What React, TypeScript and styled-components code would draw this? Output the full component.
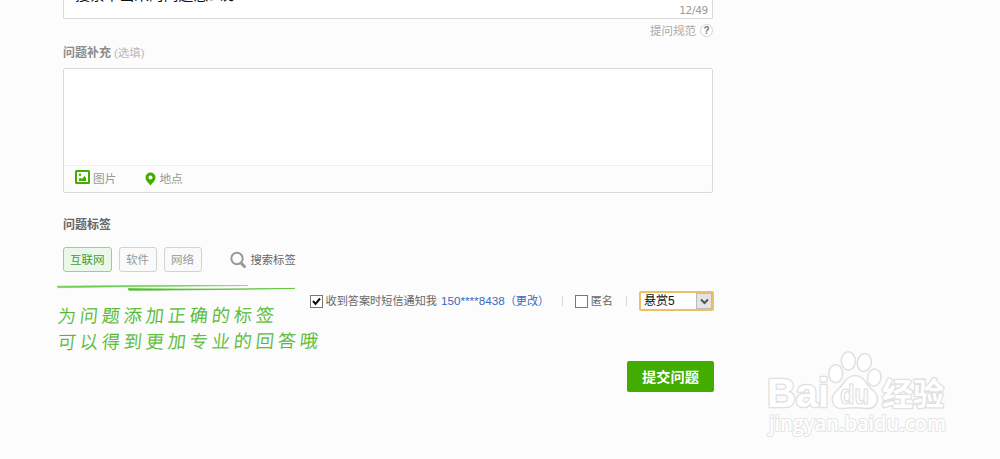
import React, { useState } from "react";
import styled, { createGlobalStyle, css } from "styled-components";

const GlobalStyle = createGlobalStyle`
  * {
    box-sizing: border-box;
  }

  body {
    margin: 0;
    height: 459px;
    overflow: hidden;
    background: #fcfcfc;
    color: #666;
    font: 12px/18px "Liberation Sans", "Noto Sans CJK SC", sans-serif;
  }
`;

const Page = styled.div`
  position: relative;
  height: 459px;
  overflow: hidden;
`;

const AskForm = styled.form`
  display: flex;
  flex-direction: column;
  width: 650px;
  margin-left: 63px;
`;

const TitleBox = styled.div`
  display: flex;
  justify-content: space-between;
  height: 19px;
  padding: 0 4px 0 11px;
  border: 1px solid #d9d9d9;
  border-top: 0;
  border-radius: 0 0 2px 2px;
  background: #fff;
`;

const TitleText = styled.div`
  margin-top: -14px;
  color: #111;
  font-size: 14.8px;
  line-height: 19px;
  white-space: nowrap;
`;

const Counter = styled.div`
  padding-top: 1px;
  color: #999;
  font: 10.5px/18px "DejaVu Sans", sans-serif;
  letter-spacing: -0.3px;
`;

const Rules = styled.div`
  display: flex;
  align-items: center;
  justify-content: flex-end;
  gap: 4px;
  height: 23px;
  margin-bottom: 2px;
  color: #aaa;
  font-size: 11.5px;
`;

const HelpMark = styled.span`
  width: 13px;
  height: 13px;
  border: 1px solid #d4d4d4;
  border-radius: 50%;
  background: #fff;
  color: #777;
  font-size: 10px;
  font-weight: bold;
  line-height: 11px;
  text-align: center;
`;

const Label = styled.div<{ $dark?: boolean }>`
  height: 18px;
  color: ${({ $dark }) => ($dark ? "#666" : "#8c8c8c")};
  font-weight: bold;

  small {
    margin-left: 3px;
    color: #b8b8b8;
    font-size: 11.5px;
    font-weight: normal;
  }
`;

const Editor = styled.div`
  display: flex;
  flex-direction: column;
  height: 125px;
  margin: 6px 0 23px;
  border: 1px solid #d9d9d9;
  border-radius: 2px;
`;

const EditorInput = styled.div`
  flex: 1;
  background: #fff;
`;

const EditorTools = styled.div`
  display: flex;
  gap: 28px;
  height: 27px;
  padding-left: 11px;
  border-top: 1px solid #eee;
  color: #999;
  font-size: 11.7px;
`;

const Tool = styled.div`
  display: flex;
  align-items: center;
  gap: 3px;

  svg {
    flex: none;
  }
`;

const TagRow = styled.div`
  display: flex;
  align-items: center;
  gap: 7px;
  height: 25px;
  margin-top: 13px;
`;

const Tag = styled.span<{ $active?: boolean }>`
  height: 25px;
  padding: 0 6.5px;
  border: 1px solid #d2d2d2;
  border-radius: 3px;
  background: #fafafa;
  color: #999;
  font-size: 11.5px;
  line-height: 24px;

  ${({ $active }) =>
    $active &&
    css`
      padding: 0 6px;
      border-color: #93d487;
      background: #ebf8e9;
      color: #459b36;
    `}
`;

const TagSearch = styled.span`
  display: flex;
  align-items: center;
  gap: 4px;
  margin-left: 21px;
  font-size: 11.3px;
`;

const Lower = styled.div`
  display: flex;
  justify-content: space-between;
  height: 89px;
  margin: 0 -1px 0 -7px;
`;

const Hint = styled.div`
  width: 240px;
  padding-top: 13px;

  svg {
    display: block;
    margin-bottom: 9px;
  }
`;

const HintLine = styled.div`
  width: 270px;
  padding-left: 2px;
  color: #4fb82b;
  font: 300 18px/26px "Noto Sans CJK SC", sans-serif;
  letter-spacing: 4px;
  white-space: nowrap;
  transform: skew(-6deg, -0.3deg);
  -webkit-text-stroke: 0.3px #4fb82b;
`;

const Options = styled.div`
  display: flex;
  align-items: center;
  flex: none;
  height: 20px;
  margin-top: 19px;
  font-size: 11.15px;
  white-space: nowrap;
`;

const Check = styled.span`
  display: flex;
  width: 13px;
  height: 13px;
  margin-right: 2.5px;
  border: 1px solid #777;
  background: #fff;
`;

const Phone = styled.span`
  margin-left: 4px;
  color: #3769c2;
`;

const PhoneNumber = styled.span`
  font-size: 11.7px;
`;

const Divider = styled.i`
  width: 1px;
  height: 10px;
  margin: 0 12.5px;
  background: #d4d9d4;
`;

const Reward = styled.div`
  display: flex;
  width: 75px;
  height: 20px;
  padding-left: 3px;
  border: 2px solid #ecc06b;
  border-radius: 2px;
  background: #fff;
  color: #111;
  font-size: 12px;
  line-height: 17px;
`;

const RewardArrow = styled.span`
  display: flex;
  align-items: center;
  justify-content: center;
  width: 16px;
  margin-left: auto;
  border: 1px solid #bbb;
  background: #e4e4e4;
`;

const Submit = styled.button`
  align-self: flex-end;
  width: 87px;
  height: 31px;
  margin-right: -1px;
  padding: 0;
  border: 0;
  border-radius: 2px;
  background: #43ac00;
  color: #fff;
  font: bold 14.2px/32px "Liberation Sans", "Noto Sans CJK SC", sans-serif;
`;

const Watermark = styled.svg`
  position: absolute;
  top: 345px;
  left: 760px;
`;

const PictureIcon = () => (
  <svg width="15" height="18" viewBox="0 0 15 18">
    <rect x="1" y="1" width="13" height="12" rx="0.5" fill="#fff" stroke="#43ac00" strokeWidth="2" />
    <circle cx="5" cy="4.7" r="1.2" fill="#43ac00" />
    <path d="M4 11V8.5l1.500-.5 1.500 1L9.500 6l1.500 2v3z" fill="#43ac00" />
  </svg>
);

const PinIcon = () => (
  <svg width="12" height="14" viewBox="0 0 12 14">
    <path
      d="M6.500 0.500a5 5 0 0 1 5 5c0 3-3 5.500-5 8-2-2.500-5-5-5-8a5 5 0 0 1 5-5zM6.500 3.500a2 2 0 1 0 0 4 2 2 0 0 0 0-4z"
      fill="#43ac00"
      fillRule="evenodd"
    />
  </svg>
);

const SearchIcon = () => (
  <svg width="17" height="18" viewBox="0 0 17 18" fill="none" stroke="#999">
    <circle cx="7" cy="7.5" r="5.7" strokeWidth="2" />
    <path d="M11.500 12.500l3 3" strokeWidth="3" strokeLinecap="round" />
  </svg>
);

const Strokes = () => (
  <svg width="242" height="7" viewBox="0 0 242 7">
    <path d="M1 1.200Q100 0 192 0.500Q100 1.500 2 2.700z" fill="#6fcc52" stroke="#6fcc52" strokeWidth="0.5" />
    <path d="M72 3.600Q140 4.500 239 3.400Q140 5 73 5.300z" fill="#52be2c" stroke="#52be2c" strokeWidth="0.7" />
  </svg>
);

const BaiduMark = () => (
  <Watermark width="200" height="105" viewBox="0 0 200 105">
    <g fill="#fff" stroke="#e0e0e0" strokeWidth="1.5">
      <g fontWeight="bold" paintOrder="stroke" strokeWidth="2.6" strokeLinejoin="round">
        <text
          x="7"
          y="62"
          fontSize="41"
          fontFamily="Liberation Sans, sans-serif"
          textLength="62"
          lengthAdjust="spacingAndGlyphs"
        >
          Bai
        </text>
        <text x="122" y="60" fontSize="31" fontFamily="Noto Sans CJK SC, sans-serif">
          经验
        </text>
      </g>
      <ellipse cx="75.7" cy="28.7" rx="7" ry="9" />
      <ellipse cx="88.3" cy="16" rx="7" ry="9.2" />
      <ellipse cx="104.3" cy="17.5" rx="7" ry="9" transform="rotate(10 104.3 17.5)" />
      <ellipse cx="114.3" cy="32.5" rx="6.7" ry="8.5" transform="rotate(10 114.3 32.5)" />
      <path d="M95 30.500c-9 0-11 9-17 14-10 8-6 20 5 19 8-1 15-1 23 0 11 1 16-11 6-19-6-5-8-14-17-14z" />
      <text
        x="80"
        y="59"
        fontSize="27"
        fontWeight="bold"
        fontFamily="Liberation Sans, sans-serif"
        strokeWidth="1.2"
        textLength="29"
        lengthAdjust="spacingAndGlyphs"
      >
        du
      </text>
    </g>
    <text
      x="9"
      y="86"
      fontSize="22"
      fontFamily="Open Sans, sans-serif"
      fontWeight="600"
      fill="#fff"
      stroke="#e4e4e4"
      strokeWidth="2"
      strokeLinejoin="round"
      paintOrder="stroke"
      textLength="177"
      lengthAdjust="spacingAndGlyphs"
    >
      jingyan.baidu.com
    </text>
  </Watermark>
);

const tags = ["互联网", "软件", "网络"];

const App: React.FC = () => {
  const [activeTag, setActiveTag] = useState(tags[0]);
  const [notify, setNotify] = useState(true);

  return (
    <Page>
      <GlobalStyle />
      <AskForm onSubmit={(e) => e.preventDefault()}>
        <TitleBox>
          <TitleText>搜索不出来的问题怎么办</TitleText>
          <Counter>12/49</Counter>
        </TitleBox>
        <Rules>
          提问规范 <HelpMark>?</HelpMark>
        </Rules>
        <Label>
          问题补充<small>(选填)</small>
        </Label>
        <Editor>
          <EditorInput />
          <EditorTools>
            <Tool>
              <PictureIcon />
              图片
            </Tool>
            <Tool>
              <PinIcon />
              地点
            </Tool>
          </EditorTools>
        </Editor>
        <Label $dark>问题标签</Label>
        <TagRow>
          {tags.map((tag) => (
            <Tag key={tag} $active={tag === activeTag} onClick={() => setActiveTag(tag)}>
              {tag}
            </Tag>
          ))}
          <TagSearch>
            <SearchIcon />
            搜索标签
          </TagSearch>
        </TagRow>
        <Lower>
          <Hint>
            <Strokes />
            <HintLine>为问题添加正确的标签</HintLine>
            <HintLine>可以得到更加专业的回答哦</HintLine>
          </Hint>
          <Options>
            <Check onClick={() => setNotify(!notify)}>
              {notify && (
                <svg width="11" height="11" viewBox="0 0 11 11">
                  <path d="M2 5l2.500 3L9 2.500" fill="none" stroke="#111" strokeWidth="2" />
                </svg>
              )}
            </Check>
            收到答案时短信通知我
            <Phone>
              <PhoneNumber>150****8438</PhoneNumber>（更改）
            </Phone>
            <Divider />
            <Check />
            匿名
            <Divider />
            <Reward>
              悬赏5
              <RewardArrow>
                <svg width="9" height="7" viewBox="0 0 9 7">
                  <path d="M1 1.500l3.500 3.500L8 1.500" fill="none" stroke="#555" strokeWidth="2" />
                </svg>
              </RewardArrow>
            </Reward>
          </Options>
        </Lower>
        <Submit>提交问题</Submit>
      </AskForm>
      <BaiduMark />
    </Page>
  );
};

export default App;
